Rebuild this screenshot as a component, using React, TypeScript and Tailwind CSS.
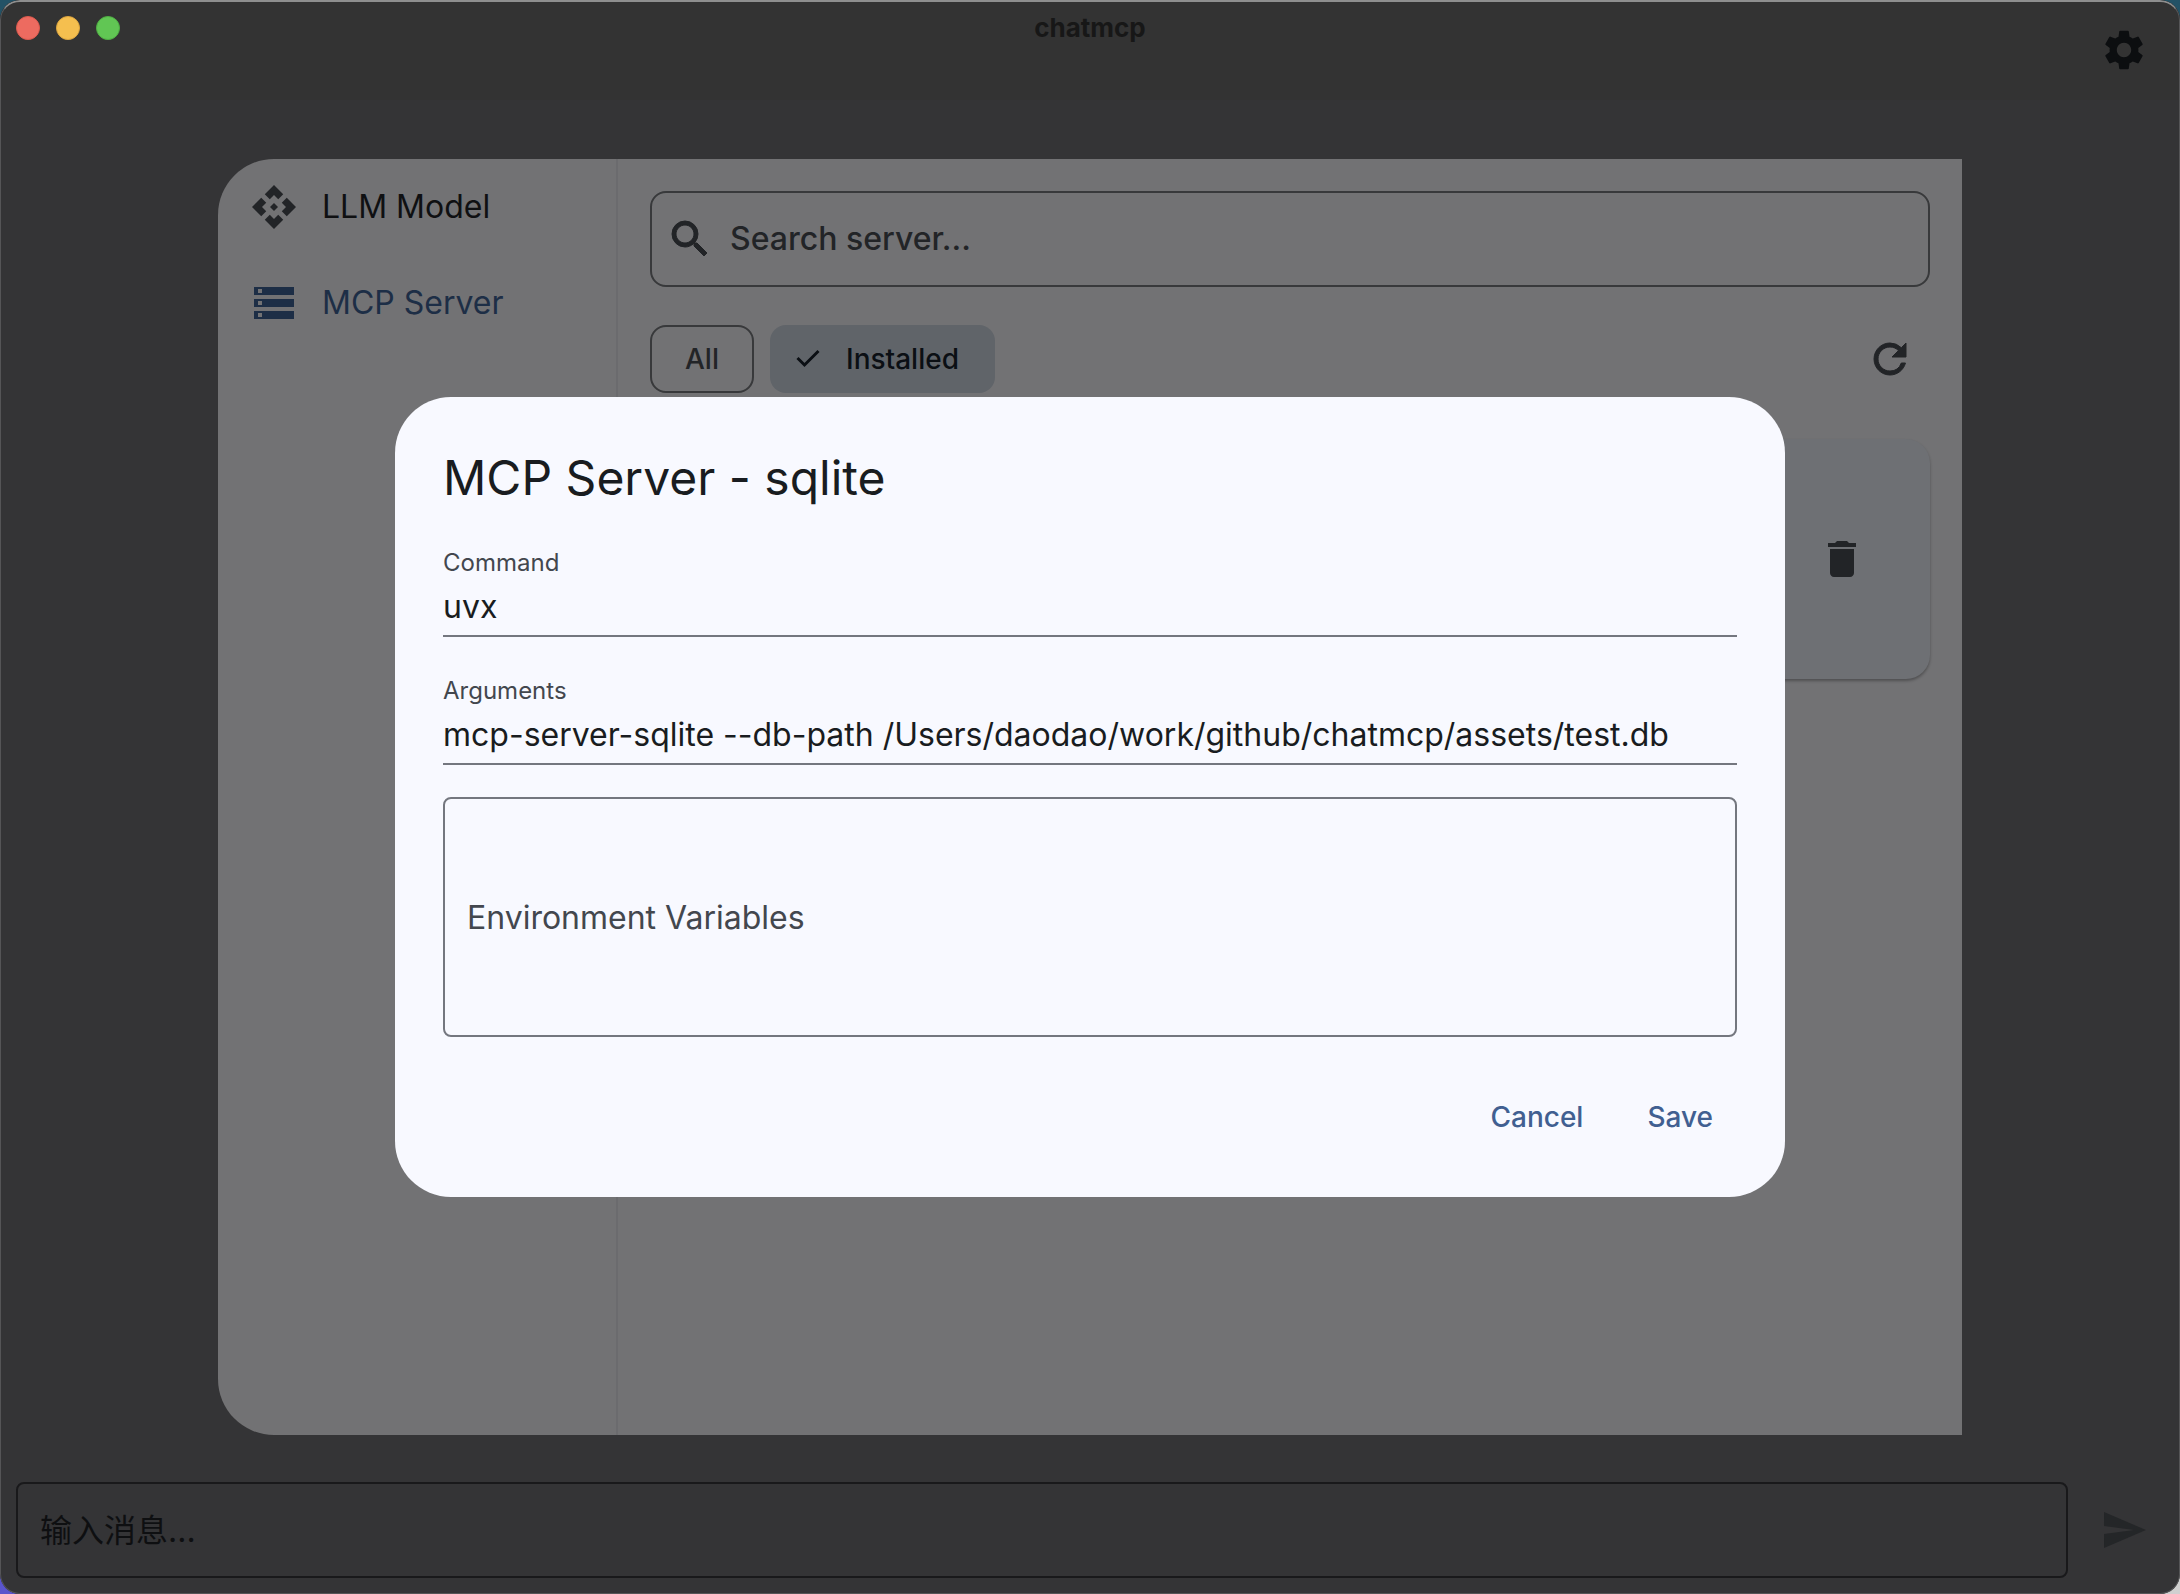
import { MdApi, MdDelete, MdSend, MdSettings, MdStorage } from "react-icons/md";

function BoldIcon({ d }: { d: string }) {
  return (
    <svg viewBox="0 0 24 24" className="size-12 shrink-0" fill="currentColor" stroke="currentColor" strokeWidth="0.5">
      <path d={d} />
    </svg>
  );
}

const SEARCH_PATH =
  "M15.5 14h-.79l-.28-.27A6.471 6.471 0 0 0 16 9.500 6.500 6.500 0 1 0 9.500 16c1.610 0 3.090-.59 4.230-1.570l.27.28v.79l5 4.990L20.490 19l-4.990-5zm-6 0C7.010 14 5 11.990 5 9.500S7.010 5 9.500 5 14 7.010 14 9.500 11.990 14 9.500 14z";
const REFRESH_PATH =
  "M17.650 6.350A7.958 7.958 0 0 0 12 4c-4.420 0-7.990 3.580-7.990 8s3.570 8 7.990 8c3.730 0 6.840-2.550 7.730-6h-2.080A5.990 5.990 0 0 1 12 18c-3.310 0-6-2.690-6-6s2.690-6 6-6c1.660 0 3.140.69 4.220 1.780L13 11h7V4l-2.350 2.350z";

function TitleBar() {
  return (
    <header className="relative flex h-[100px] shrink-0 items-center justify-end bg-[#333333] pr-4">
      <div className="absolute left-4 top-4 flex gap-4">
        <button aria-label="Close" className="size-6 rounded-full border border-[#dc5a4e] bg-[#ed6b60]" />
        <button aria-label="Minimize" className="size-6 rounded-full border border-[#dba53f] bg-[#f5bf4f]" />
        <button aria-label="Zoom" className="size-6 rounded-full border border-[#4fae43] bg-[#61c654]" />
      </div>
      <h1 className="pointer-events-none absolute inset-x-0 top-3 text-center text-[26px] leading-8 font-bold text-[#171717]">
        chatmcp
      </h1>
      <button aria-label="Settings" className="flex size-20 items-center justify-center text-[#0c0e10]">
        <MdSettings className="size-12" />
      </button>
    </header>
  );
}

function MessageBar() {
  return (
    <footer className="flex shrink-0 items-center gap-4 px-4 pb-4">
      <input
        aria-label="输入消息"
        placeholder="输入消息..."
        className="h-24 min-w-0 flex-1 rounded-lg border-2 border-[#19191b] bg-transparent px-[22px] text-[32px] text-[#0e0f11] placeholder:text-[#0e0f11] outline-none"
      />
      <button aria-label="Send" className="flex size-20 items-center justify-center text-[#242628]">
        <MdSend className="size-12" />
      </button>
    </footer>
  );
}

function SettingsPanel() {
  return (
    <div className="absolute inset-0 flex items-center justify-center">
      <section className="flex h-4/5 w-4/5 overflow-hidden rounded-l-[56px] bg-[#727274]">
        <nav className="w-[400px] shrink-0 border-r-2 border-[#6b6b6e] text-[32px]">
          <button className="flex h-24 w-full items-center gap-6 px-8 text-[#0f1012]">
            <MdApi className="size-12 text-[#222427]" />
            LLM Model
          </button>
          <button className="flex h-24 w-full items-center gap-6 px-8 text-[#1d2e46]">
            <MdStorage className="size-12" />
            MCP Server
          </button>
        </nav>
        <div className="min-w-0 flex-1 p-8">
          <label className="flex h-24 items-center gap-4 rounded-2xl border-2 border-[#38393b] px-[14px] text-[#222427]">
            <BoldIcon d={SEARCH_PATH} />
            <input
              aria-label="Search server"
              placeholder="Search server..."
              className="min-w-0 flex-1 bg-transparent text-[32px] font-medium placeholder:text-[#222427] outline-none"
            />
          </label>
          <div className="mt-8 flex h-20 items-center gap-4 text-[28px] font-medium">
            <button className="h-[68px] min-w-26 rounded-2xl border-2 border-[#38393b] text-[#222427]">All</button>
            <button className="flex h-[68px] items-center gap-6 rounded-2xl bg-[#606469] pl-6 pr-9 text-[#0b0f14]">
              <svg viewBox="0 0 28 28" className="size-7" fill="none" stroke="currentColor" strokeWidth="3">
                <path d="M3.500 13 10.500 20 24.500 6" />
              </svg>
              Installed
            </button>
            <button aria-label="Refresh" className="ml-auto flex size-20 items-center justify-center text-[#222427]">
              <BoldIcon d={REFRESH_PATH} />
            </button>
          </div>
          <article className="mt-10 flex h-60 items-center justify-end rounded-3xl bg-[#6e7074] pr-12 shadow-[0_2px_3px_rgba(0,0,0,0.3)]">
            <button aria-label="Delete" className="flex size-20 items-center justify-center text-[#222427]">
              <MdDelete className="size-12" />
            </button>
          </article>
        </div>
      </section>
    </div>
  );
}

function TextField({ id, label, value }: { id: string; label: string; value: string }) {
  return (
    <div className="flex flex-col border-b-2 border-[#74777f] pb-1">
      <label htmlFor={id} className="text-2xl leading-8 text-[#43474e]">
        {label}
      </label>
      <input
        id={id}
        defaultValue={value}
        className="mt-1 h-12 w-full bg-transparent text-[32px] text-[#191c20] outline-none"
      />
    </div>
  );
}

function ServerDialog() {
  return (
    <div className="absolute inset-0 flex items-center justify-center">
      <div
        role="dialog"
        aria-labelledby="dialog-title"
        className="w-full max-w-[1390px] rounded-[56px] bg-[#f8f9ff] p-12"
      >
        <h2 id="dialog-title" className="text-5xl leading-[66px] text-[#191c20]">
          MCP Server - sqlite
        </h2>
        <form className="mt-9 flex flex-col">
          <div className="flex flex-col gap-[38px]">
            <TextField id="command" label="Command" value="uvx" />
            <TextField
              id="arguments"
              label="Arguments"
              value="mcp-server-sqlite --db-path /Users/daodao/work/github/chatmcp/assets/test.db"
            />
          </div>
          <textarea
            aria-label="Environment Variables"
            placeholder="Environment Variables"
            className="mt-8 h-60 w-full resize-none rounded-lg border-2 border-[#74777f] bg-transparent px-[22px] py-[95px] text-[32px] leading-12 text-[#191c20] placeholder:text-[#43474e] outline-none"
          />
          <div className="mt-12 flex justify-end gap-4 text-[28px] font-medium text-[#415f91]">
            <button type="button" className="h-16 px-6">
              Cancel
            </button>
            <button type="button" className="h-16 px-6">
              Save
            </button>
          </div>
        </form>
      </div>
    </div>
  );
}

export default function App() {
  return (
    <div className="h-screen bg-[linear-gradient(180deg,#235266_50%,transparent_50%),linear-gradient(90deg,#5a55cc_50%,#d0d0d0_50%)] font-['Inter','Noto_Sans_CJK_SC',sans-serif]">
      <div className="relative flex h-full flex-col justify-between overflow-hidden rounded-[20px] bg-[#343436]">
        <TitleBar />
        <MessageBar />
        <SettingsPanel />
        <ServerDialog />
        <div className="pointer-events-none absolute inset-0 rounded-[20px] border border-t-2 border-[#555557] border-t-[#8e8f8f]" />
      </div>
    </div>
  );
}
